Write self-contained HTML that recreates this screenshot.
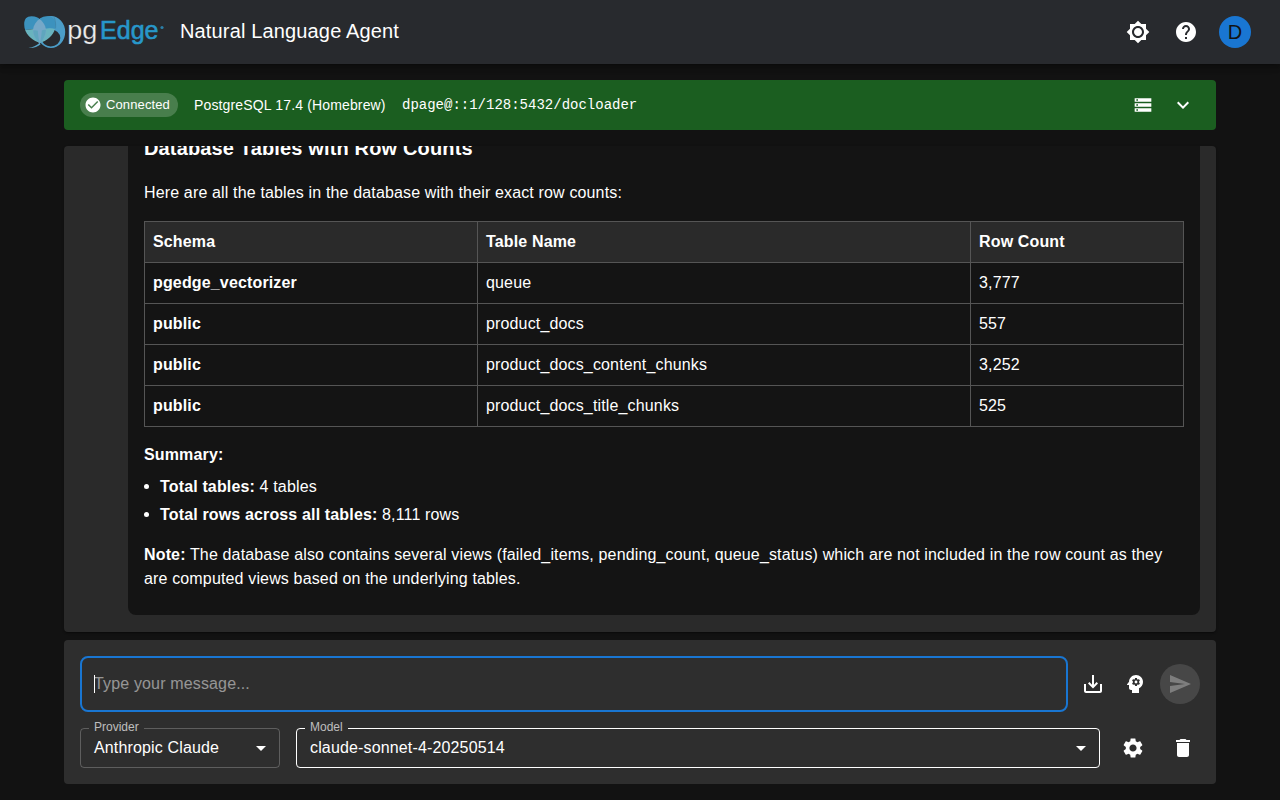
<!DOCTYPE html>
<html><head><meta charset="utf-8">
<style>
*{box-sizing:border-box;margin:0;padding:0}
html,body{width:1280px;height:800px;overflow:hidden;background:#121212;font-family:"Liberation Sans",sans-serif;color:#fff}
.a{position:absolute}
svg{display:block}
.hdr{position:absolute;left:0;top:0;width:1280px;height:64px;background:#282a2e;box-shadow:0 2px 4px -1px rgba(0,0,0,.2),0 4px 5px 0 rgba(0,0,0,.14),0 1px 10px 0 rgba(0,0,0,.12);z-index:2}
.title{position:absolute;left:180px;top:19px;font-size:20px;line-height:24px;letter-spacing:.15px;color:#fff;white-space:nowrap}
.conn{position:absolute;left:64px;top:80px;width:1152px;height:50px;background:#1b5e20;border-radius:4px}
.chip{position:absolute;left:16px;top:13px;width:98px;height:24px;border-radius:12px;background:rgba(255,255,255,.2)}
.chip span{position:absolute;left:26px;top:4px;font-size:13px;letter-spacing:.12px;line-height:16px;white-space:nowrap}
.pg{position:absolute;left:130px;top:16px;font-size:14px;line-height:18px;white-space:nowrap;letter-spacing:.15px}
.mono{position:absolute;left:338px;top:16px;font-family:"Liberation Mono",monospace;font-size:14px;line-height:18px;white-space:nowrap}
.chat{position:absolute;left:64px;top:146px;width:1152px;height:486px;background:#2a2a2a;border-radius:4px;overflow:hidden;box-shadow:0 2px 1px -1px rgba(0,0,0,.2),0 1px 1px 0 rgba(0,0,0,.14),0 1px 3px 0 rgba(0,0,0,.12)}
.msg{position:absolute;left:64px;top:-60px;width:1072px;height:529px;background:#141414;border-radius:8px}
.t{position:absolute;white-space:nowrap;letter-spacing:.15px;font-size:16px;line-height:24px}
b{font-weight:bold}
.tbl{position:absolute;left:80px;top:75px;width:1040px;height:206px;border:1px solid #555}
.row{position:absolute;left:0;width:1038px;height:41px;border-top:1px solid #555}
.vl{position:absolute;top:0;width:1px;height:204px;background:#555}
.cell{position:absolute;top:8px;font-size:16px;line-height:24px;letter-spacing:.15px;white-space:nowrap}
.inp{position:absolute;left:64px;top:640px;width:1152px;height:144px;background:#2e2e2e;border-radius:4px}
.tf{position:absolute;left:16px;top:16px;width:988px;height:56px;border:2px solid #1976d2;border-radius:8px;}
.ph{position:absolute;left:12px;top:16px;font-size:16px;line-height:20px;color:rgba(255,255,255,.5);letter-spacing:.15px;white-space:nowrap}
.caret{position:absolute;left:12px;top:17px;width:1px;height:18px;background:#fff}
.sel{position:absolute;top:88px;height:40px;border:1px solid rgba(255,255,255,.23);border-radius:4px}
.sel .lab{position:absolute;left:8px;top:-10px;padding:0 5px;background:#2e2e2e;font-size:12px;line-height:16px;color:rgba(255,255,255,.7)}
.sel .val{position:absolute;left:13px;top:9px;font-size:16px;line-height:20px;letter-spacing:.15px;white-space:nowrap}
.sel svg{position:absolute;right:6px;top:7px}
</style></head><body>
<div class="hdr">
  <svg class="a" style="left:0;top:0" width="175" height="64" viewBox="0 0 175 64">
    <defs>
      <clipPath id="ct"><path d="M0,0H70V29Q60,28.5 55.3,29 Q50,27.6 45,28.8 Q39,30 33.5,29 Q28,29.8 24,30H0Z"/></clipPath>
      <clipPath id="cb"><path d="M0,64H70V29Q60,28.5 55.3,29 Q50,27.6 45,28.8 Q39,30 33.5,29 Q28,29.8 24,30H0Z"/></clipPath>
    </defs>
    <path fill-rule="evenodd" d="M36.8,32 A14.2,16 0 1 0 65.2,32 A14.2,16 0 1 0 36.8,32Z M41.3,38 A9.5,8.5 0 1 0 60.3,38 A9.5,8.5 0 1 0 41.3,38Z" fill="#4b9dc8"/>
    <g clip-path="url(#ct)">
      <path d="M40,43 C33,40.5 24.3,35 24.2,24.5 C24.2,19 26.5,16.2 31.5,16.2 C36,16.2 38.5,17.8 39.5,19 C40.5,17.8 43,16.2 48,16.2 C53,16.2 55.5,19.5 55.5,24.5 C55.5,35 47,40.5 40,43Z" fill="#3c92be"/>
    </g>
    <g clip-path="url(#cb)">
      <path d="M40,43 C33,40.5 24.3,35 24.2,24.5 C24.2,19 26.5,16.2 31.5,16.2 C36,16.2 38.5,17.8 39.5,19 C40.5,17.8 43,16.2 48,16.2 C53,16.2 55.5,19.5 55.5,24.5 C55.5,35 47,40.5 40,43Z" fill="#69b3be"/>
    </g>
    <path d="M53.6,16.8 C55.2,18.8 55.9,22.5 55.6,28.5" stroke="rgba(30,40,50,.25)" stroke-width=".6" fill="none"/>
    <path d="M39.5,19 C35,22.5 33,27 33,31 C33,36 36.5,40.5 39.8,43.5 C43,40.5 46,36 46,31 C46,27 44,22.5 39.5,19Z" fill="#76a8c8"/>
    <path d="M33.2,30.5 C33.5,36 36.5,40.5 39.8,43.5 C38.6,39 38,34.5 37.8,30.8 C36,30 34.5,30 33.2,30.5Z" fill="#5fa6be"/>
    <path d="M45.9,30.3 C45.5,36 43,40.5 39.8,43.5 C41,39 41.6,34.5 41.8,30.5 C43.5,29.6 44.8,29.7 45.9,30.3Z" fill="#5fa6be"/>
    <path d="M39.6,42.8 C37.2,45.4 33.2,47.2 28.5,47.9 C33.5,48.2 37.8,47 40.6,44.3Z" fill="#5aa6ca"/>
    <text x="67.3" y="38.8" font-family="Liberation Sans" font-size="26" fill="#ececec" stroke="#282a2e" stroke-width="0.2" textLength="30" lengthAdjust="spacingAndGlyphs">pg</text>
    <text x="100" y="39" font-family="Liberation Sans" font-size="26" fill="#2797ca" stroke="#2797ca" stroke-width="0.6" textLength="58.5" lengthAdjust="spacingAndGlyphs">Edge</text>
    <circle cx="162" cy="27.5" r="1.6" fill="#2b7fa8"/>
  </svg>
  <div class="title">Natural Language Agent</div>
  <svg class="a" style="left:1126px;top:20px" width="24" height="24" viewBox="0 0 24 24"><path fill="#fff" d="M20 8.69V4h-4.69L12 .69 8.69 4H4v4.69L.69 12 4 15.31V20h4.69L12 23.31 15.31 20H20v-4.69L23.31 12 20 8.69zM12 18c-3.31 0-6-2.69-6-6s2.69-6 6-6 6 2.69 6 6-2.69 6-6 6zm0-10c-2.21 0-4 1.79-4 4s1.79 4 4 4 4-1.79 4-4-1.790-4-4-4z"/></svg>
  <svg class="a" style="left:1174px;top:20px" width="24" height="24" viewBox="0 0 24 24"><path fill="#fff" d="M12 2C6.48 2 2 6.48 2 12s4.48 10 10 10 10-4.48 10-10S17.52 2 12 2zm1 17h-2v-2h2v2zm2.07-7.75-.9.92C13.45 12.9 13 13.5 13 15h-2v-.5c0-1.1.45-2.1 1.17-2.83l1.24-1.26c.37-.36.59-.86.59-1.41 0-1.1-.9-2-2-2s-2 .9-2 2H8c0-2.210 1.79-4 4-4s4 1.79 4 4c0 .88-.36 1.68-.93 2.25z"/></svg>
  <div class="a" style="left:1219px;top:16px;width:32px;height:32px;border-radius:50%;background:#1976d2;color:#121212;font-size:20px;line-height:32px;text-align:center">D</div>
</div>
<div class="conn">
  <div class="chip">
    <svg class="a" style="left:4px;top:3px" width="18" height="18" viewBox="0 0 24 24"><path fill="#fff" d="M12 2C6.48 2 2 6.48 2 12s4.48 10 10 10 10-4.48 10-10S17.52 2 12 2zm-2 15-5-5 1.41-1.41L10 14.17l7.59-7.59L19 8l-9 9z"/></svg>
    <span>Connected</span></div>
  <div class="pg">PostgreSQL 17.4 (Homebrew)</div>
  <div class="mono">dpage@::1/128:5432/docloader</div>
  <svg class="a" style="left:1069px;top:15px" width="20" height="20" viewBox="0 0 24 24"><path fill="#fff" d="M2 20h20v-4H2v4zm2-3h2v2H4v-2zM2 4v4h20V4H2zm4 3H4V5h2v2zm-4 7h20v-4H2v4zm2-3h2v2H4v-2z"/></svg>
  <svg class="a" style="left:1107px;top:13px" width="24" height="24" viewBox="0 0 24 24"><path fill="#fff" d="M16.59 8.59 12 13.17 7.41 8.59 6 10l6 6 6-6z"/></svg>
</div>
<div class="chat">
  <div class="msg"></div>
  <div class="t" style="left:80px;top:-14px;font-size:20px;line-height:32px;font-weight:bold">Database Tables with Row Counts</div>
  <div class="t" style="left:80px;top:35px">Here are all the tables in the database with their exact row counts:</div>
  <div class="tbl">
    <div class="a" style="left:0;top:0;width:1038px;height:40px;background:#2a2a2a"></div>
    <div class="vl" style="left:332px"></div>
    <div class="vl" style="left:825px"></div>
    <div class="row" style="top:40px"></div>
    <div class="row" style="top:81px"></div>
    <div class="row" style="top:122px"></div>
    <div class="row" style="top:163px"></div>
    <div class="cell" style="left:8px;top:8px"><b>Schema</b></div>
    <div class="cell" style="left:341px;top:8px"><b>Table Name</b></div>
    <div class="cell" style="left:834px;top:8px"><b>Row Count</b></div>
    <div class="cell" style="left:8px;top:49px"><b>pgedge_vectorizer</b></div>
    <div class="cell" style="left:341px;top:49px">queue</div>
    <div class="cell" style="left:834px;top:49px">3,777</div>
    <div class="cell" style="left:8px;top:90px"><b>public</b></div>
    <div class="cell" style="left:341px;top:90px">product_docs</div>
    <div class="cell" style="left:834px;top:90px">557</div>
    <div class="cell" style="left:8px;top:131px"><b>public</b></div>
    <div class="cell" style="left:341px;top:131px">product_docs_content_chunks</div>
    <div class="cell" style="left:834px;top:131px">3,252</div>
    <div class="cell" style="left:8px;top:172px"><b>public</b></div>
    <div class="cell" style="left:341px;top:172px">product_docs_title_chunks</div>
    <div class="cell" style="left:834px;top:172px">525</div>
  </div>
  <div class="t" style="left:80px;top:297px"><b>Summary:</b></div>
  <div class="a" style="left:80px;top:338px;width:5px;height:5px;border-radius:50%;background:#fff"></div>
  <div class="t" style="left:96px;top:329px"><b>Total tables:</b> 4 tables</div>
  <div class="a" style="left:80px;top:366px;width:5px;height:5px;border-radius:50%;background:#fff"></div>
  <div class="t" style="left:96px;top:357px"><b>Total rows across all tables:</b> 8,111 rows</div>
  <div class="t" style="left:80px;top:397px"><b>Note:</b> The database also contains several views (failed_items, pending_count, queue_status) which are not included in the row count as they</div>
  <div class="t" style="left:80px;top:421px">are computed views based on the underlying tables.</div>
</div>
<div class="inp">
  <div class="tf"><div class="ph">Type your message...</div><div class="caret"></div></div>
  <svg class="a" style="left:1017px;top:32px" width="24" height="24" viewBox="0 0 24 24"><path fill="#fff" d="M19 12v7H5v-7H3v7c0 1.1.9 2 2 2h14c1.1 0 2-.9 2-2v-7h-2zm-6 .67 2.59-2.58L17 11.5l-5 5-5-5 1.41-1.41L11 12.67V3h2z"/></svg>
  <svg class="a" style="left:1059px;top:32px" width="24" height="24" viewBox="0 0 24 24"><path fill="#fff" d="M13 8.57c-.79 0-1.43.64-1.43 1.43s.64 1.43 1.43 1.43 1.43-.64 1.43-1.43-.64-1.43-1.43-1.43z"/><path fill="#fff" d="M13 3C9.25 3 6.2 5.94 6.02 9.64L4.1 12.2c-.25.33-.01.8.4.8H6v3c0 1.1.9 2 2 2h1v3h7v-4.68c2.36-1.12 4-3.53 4-6.32 0-3.87-3.13-7-7-7zm3 7c0 .13-.01.26-.02.39l.83.66c.08.06.1.16.05.25l-.8 1.39c-.05.09-.16.12-.24.09l-.99-.4c-.21.16-.43.29-.67.39L14 13.830c-.01.1-.1.17-.2.17h-1.6c-.1 0-.18-.07-.2-.17l-.15-1.06c-.25-.1-.47-.23-.68-.39l-.99.4c-.09.03-.2 0-.25-.09l-.8-1.39c-.05-.08-.03-.19.05-.25l.84-.66c-.01-.13-.02-.26-.02-.39s.02-.27.04-.39l-.85-.66c-.08-.06-.1-.16-.05-.26l.8-1.38c.05-.09.15-.12.24-.09l1 .4c.2-.15.43-.29.67-.39L12 6.17c.02-.1.1-.17.2-.17h1.6c.1 0 .18.07.19.17l.15 1.06c.24.1.46.23.67.39l1-.4c.09-.03.2 0 .24.09l.8 1.38c.05.09.03.2-.05.26l-.85.66c.03.12.04.25.04.39z"/></svg>
  <div class="a" style="left:1096px;top:24px;width:40px;height:40px;border-radius:50%;background:rgba(255,255,255,.12)"></div>
  <svg class="a" style="left:1104px;top:32px" width="24" height="24" viewBox="0 0 24 24"><path fill="rgba(255,255,255,.3)" d="M2.01 21 23 12 2.01 3 2 10l15 2-15 2z"/></svg>
  <div class="sel" style="left:16px;width:200px"><div class="lab">Provider</div><div class="val">Anthropic Claude</div>
    <svg width="24" height="24" viewBox="0 0 24 24"><path fill="#fff" d="M7 10l5 5 5-5z"/></svg></div>
  <div class="sel" style="left:232px;width:804px;border-color:#fff"><div class="lab">Model</div><div class="val">claude-sonnet-4-20250514</div>
    <svg width="24" height="24" viewBox="0 0 24 24"><path fill="#fff" d="M7 10l5 5 5-5z"/></svg></div>
  <svg class="a" style="left:1057px;top:96px" width="24" height="24" viewBox="0 0 24 24"><path fill="#fff" d="M19.14 12.94c.04-.3.06-.61.06-.94 0-.32-.02-.64-.07-.94l2.03-1.58c.18-.14.23-.41.12-.61l-1.92-3.32c-.12-.22-.37-.29-.59-.22l-2.39.96c-.5-.38-1.030-.7-1.62-.94l-.36-2.54c-.04-.24-.24-.41-.48-.41h-3.84c-.24 0-.43.17-.47.41l-.36 2.54c-.59.24-1.13.57-1.62.94l-2.39-.96c-.22-.08-.47 0-.59.22L2.74 8.87c-.12.21-.08.47.12.61l2.03 1.58c-.05.3-.09.63-.09.94s.02.64.07.94l-2.03 1.58c-.18.14-.23.41-.12.61l1.92 3.32c.12.22.37.29.59.22l2.39-.96c.5.38 1.03.7 1.62.94l.36 2.54c.05.24.24.41.48.41h3.84c.24 0 .44-.17.47-.41l.36-2.54c.59-.24 1.13-.56 1.62-.94l2.39.96c.22.08.47 0 .59-.22l1.92-3.32c.12-.22.07-.47-.12-.61l-2.01-1.58zM12 15.6c-1.98 0-3.6-1.62-3.6-3.6s1.62-3.6 3.6-3.6 3.6 1.62 3.6 3.6-1.62 3.6-3.6 3.6z"/></svg>
  <svg class="a" style="left:1107px;top:96px" width="24" height="24" viewBox="0 0 24 24"><path fill="#fff" d="M6 19c0 1.1.9 2 2 2h8c1.1 0 2-.9 2-2V7H6v12zM19 4h-3.5l-1-1h-5l-1 1H5v2h14V4z"/></svg>
</div>
</body></html>
